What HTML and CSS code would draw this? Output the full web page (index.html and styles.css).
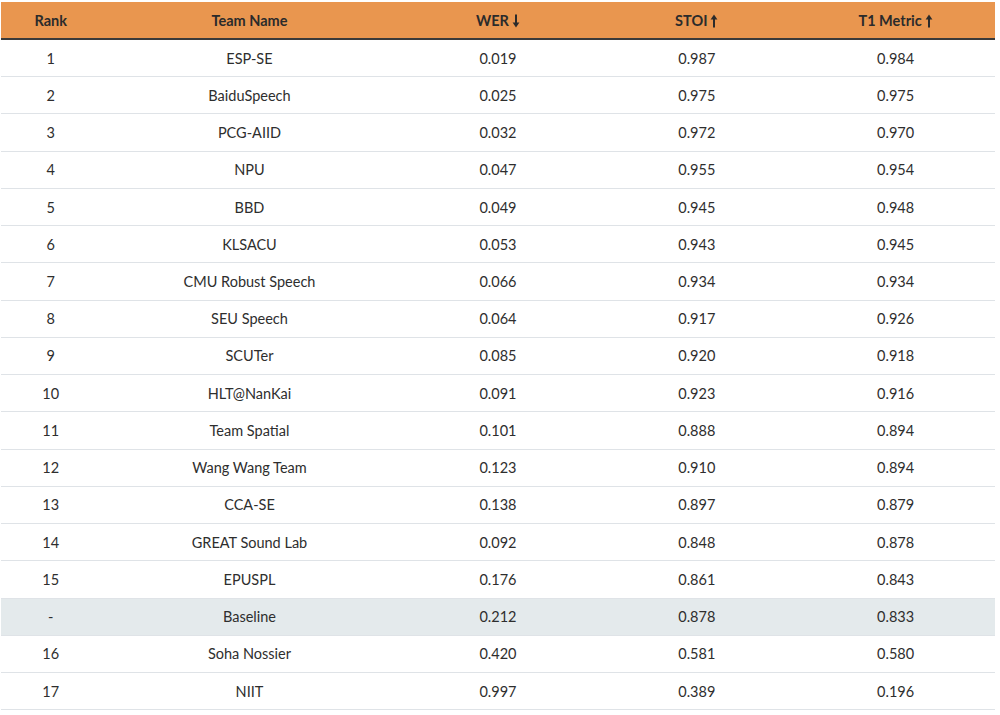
FILE: index.html
```html
<!DOCTYPE html>
<html>
<head>
<meta charset="utf-8">
<link rel="stylesheet" href="styles.css">
</head>
<body>
<table class="board">
  <colgroup>
    <col class="c-rank"><col class="c-team"><col class="c-num"><col class="c-num"><col class="c-num">
  </colgroup>
  <thead>
    <tr>
      <th>Rank</th>
      <th>Team Name</th>
      <th>WER<svg class="arr" viewBox="0 0 8 14" width="8" height="14"><path d="M4 0.5V12" stroke="currentColor" stroke-width="2"/><path d="M0.6 8.6L4 13.4L7.4 8.6Z" fill="currentColor"/></svg></th>
      <th>STOI<svg class="arr" viewBox="0 0 8 14" width="8" height="14"><path d="M4 13.5V2" stroke="currentColor" stroke-width="2"/><path d="M0.6 5.4L4 0.6L7.4 5.4Z" fill="currentColor"/></svg></th>
      <th>T1 Metric<svg class="arr" viewBox="0 0 8 14" width="8" height="14"><path d="M4 13.5V2" stroke="currentColor" stroke-width="2"/><path d="M0.6 5.4L4 0.6L7.4 5.4Z" fill="currentColor"/></svg></th>
    </tr>
  </thead>
  <tbody>
    <tr><td>1</td><td>ESP-SE</td><td>0.019</td><td>0.987</td><td>0.984</td></tr>
    <tr><td>2</td><td>BaiduSpeech</td><td>0.025</td><td>0.975</td><td>0.975</td></tr>
    <tr><td>3</td><td>PCG-AIID</td><td>0.032</td><td>0.972</td><td>0.970</td></tr>
    <tr><td>4</td><td>NPU</td><td>0.047</td><td>0.955</td><td>0.954</td></tr>
    <tr><td>5</td><td>BBD</td><td>0.049</td><td>0.945</td><td>0.948</td></tr>
    <tr><td>6</td><td>KLSACU</td><td>0.053</td><td>0.943</td><td>0.945</td></tr>
    <tr><td>7</td><td>CMU Robust Speech</td><td>0.066</td><td>0.934</td><td>0.934</td></tr>
    <tr><td>8</td><td>SEU Speech</td><td>0.064</td><td>0.917</td><td>0.926</td></tr>
    <tr><td>9</td><td>SCUTer</td><td>0.085</td><td>0.920</td><td>0.918</td></tr>
    <tr><td>10</td><td>HLT@NanKai</td><td>0.091</td><td>0.923</td><td>0.916</td></tr>
    <tr><td>11</td><td>Team Spatial</td><td>0.101</td><td>0.888</td><td>0.894</td></tr>
    <tr><td>12</td><td>Wang Wang Team</td><td>0.123</td><td>0.910</td><td>0.894</td></tr>
    <tr><td>13</td><td>CCA-SE</td><td>0.138</td><td>0.897</td><td>0.879</td></tr>
    <tr><td>14</td><td>GREAT Sound Lab</td><td>0.092</td><td>0.848</td><td>0.878</td></tr>
    <tr><td>15</td><td>EPUSPL</td><td>0.176</td><td>0.861</td><td>0.843</td></tr>
    <tr class="baseline"><td>-</td><td>Baseline</td><td>0.212</td><td>0.878</td><td>0.833</td></tr>
    <tr><td>16</td><td>Soha Nossier</td><td>0.420</td><td>0.581</td><td>0.580</td></tr>
    <tr><td>17</td><td>NIIT</td><td>0.997</td><td>0.389</td><td>0.196</td></tr>
  </tbody>
</table>
</body>
</html>
```
FILE: styles.css
```css
html, body {
  margin: 0;
  padding: 0;
  background: #ffffff;
}
body {
  padding: 2px 5px 0 1px;
  font-family: Lato, "Open Sans", sans-serif;
  color: #2e2e2e;
}
.board {
  width: 994px;
  border-collapse: collapse;
  table-layout: fixed;
  font-size: 14.5px;
}
.c-rank { width: 10%; }
.c-team { width: 30%; }
.c-num { width: 20%; }
.board th {
  background: #e9964f;
  color: #2b2b2b;
  font-weight: 700;
  height: 36px;
  padding: 0 8px;
  text-align: center;
  vertical-align: middle;
  border-bottom: 2px solid #3a3a3a;
}
.board th .arr {
  margin-left: 3px;
  vertical-align: -2px;
}
.board td {
  height: 36.24px;
  padding: 0 8px;
  text-align: center;
  vertical-align: middle;
  border-bottom: 1px solid #dfe3e7;
}
.board tr.baseline td {
  background: #e4eaec;
}
```
